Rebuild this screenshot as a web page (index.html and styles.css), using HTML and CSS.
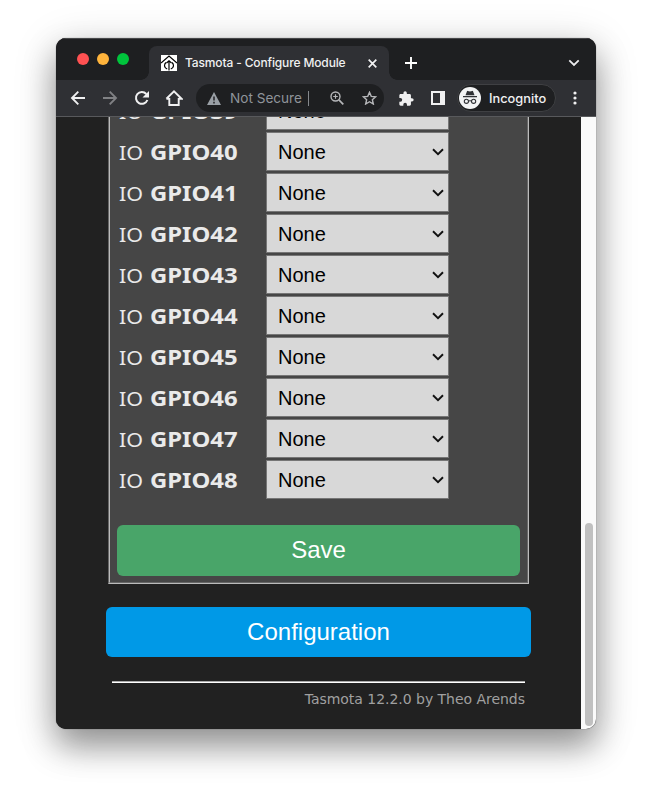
FILE: index.html
```html
<!DOCTYPE html>
<html lang="en">
<head>
<meta charset="utf-8">
<title>Tasmota - Configure Module</title>
<link rel="stylesheet" href="styles.css">
</head>
<body>
<svg width="0" height="0" class="defs"><symbol id="chev" viewBox="0 0 12 8"><path d="M1 1.300 6 6.200l5-4.900" fill="none" stroke="#111" stroke-width="1.900"/></symbol></svg>
<div class="window">
  <header class="tabs">
    <div class="lights"><i class="red"></i><i class="amber"></i><i class="green"></i></div>
    <div class="tab">
      <svg class="favicon" width="16" height="16" viewBox="0 0 16 16"><path fill="#fff" d="M0 0h16v16H0z"/><path d="M0 8 8 1l8 7M8 6v9.500M5.500 8 8 5.700 10.500 8M6.200 14C3 12.800 2.800 9.500 5 7.500M9.800 14c3.200-1.200 3.400-4.500 1.200-6.500" fill="none" stroke="#000" stroke-width="1.200"/></svg>
      <span class="tab-title">Tasmota - Configure Module</span>
      <svg class="close" width="9" height="9" viewBox="0 0 8 8"><path d="m.6.6 6.800 6.800m0-6.800L.6 7.400" stroke="#f1f1f2" stroke-width="1.500"/></svg>
    </div>
    <svg class="plus" width="12" height="12" viewBox="0 0 12 12"><path d="M6 0v12M0 6h12" stroke="#fff" stroke-width="1.900"/></svg>
    <svg class="tab-menu" width="12" height="8" viewBox="0 0 12 8"><path d="m1.300 1.300 4.700 4.600 4.700-4.600" fill="none" stroke="#ececee" stroke-width="1.800"/></svg>
  </header>
  <nav class="toolbar">
    <svg width="16" height="16" viewBox="0 0 16 16"><path d="M15 8H2.200M8.300 1.700 2 8l6.300 6.300" fill="none" stroke="#f0f0f1" stroke-width="1.900"/></svg>
    <svg width="16" height="16" viewBox="0 0 16 16"><path d="M1 8h12.800M7.700 1.700 14 8l-6.300 6.300" fill="none" stroke="#808184" stroke-width="1.900"/></svg>
    <svg width="16" height="16" viewBox="0 0 16 16"><path d="M13.400 10A5.900 5.900 0 1 1 12.300 4" fill="none" stroke="#f0f0f1" stroke-width="2"/><path d="M15 1v6.500H8.500z" fill="#f0f0f1"/></svg>
    <svg width="18" height="16" viewBox="0 0 18 16"><path d="M4.300 8v7h9.400V8M1.400 8.800 9 1.400l7.600 7.400h-2.900M1.400 8.800h2.900" fill="none" stroke="#f0f0f1" stroke-width="1.900"/></svg>
    <div class="address">
      <svg width="14" height="13" viewBox="0 0 14 13"><path d="m7 0 7 13H0z" fill="#9aa0a6"/><path d="M7 4.500v4M7 9.800v1.600" stroke="#202124" stroke-width="1.500"/></svg>
      <span class="insecure">Not Secure</span>
      <i class="caret"></i>
      <svg class="magnify" width="14" height="14" viewBox="0 0 14 14"><g fill="none" stroke="#b5b6b9"><circle cx="5.500" cy="5.500" r="4.500" stroke-width="1.400"/><path d="m8.900 8.900 4.400 4.400" stroke-width="1.700"/><path d="M5.500 3.200v4.600M3.200 5.500h4.600" stroke-width="1.200"/></g></svg>
      <svg class="star" width="15" height="14" viewBox="0 0 15 14"><path d="m7.500 1.300 1.750 4.050 4.450.4-3.350 2.900.98 4.350L7.500 10.700 3.670 13l.98-4.350L1.300 5.750l4.450-.4z" fill="none" stroke="#b5b6b9" stroke-width="1.400"/></svg>
    </div>
    <svg class="puzzle" width="15" height="15" viewBox="1.500 .5 22 22"><path fill="#f0f0f1" d="M20.500 11H19V7c0-1.100-.9-2-2-2h-4V3.500a2.500 2.500 0 0 0-5 0V5H4c-1.100 0-2 .9-2 2v3.800h1.500a2.700 2.700 0 0 1 0 5.400H2V20c0 1.100.9 2 2 2h3.800v-1.500a2.700 2.700 0 0 1 5.400 0V22H17c1.100 0 2-.9 2-2v-4h1.500a2.500 2.500 0 0 0 0-5z"/></svg>
    <svg class="panel" width="14" height="14" viewBox="0 0 14 14"><path fill="#f0f0f1" fill-rule="evenodd" d="M0 0h14v14H0zM2 2v10h7V2z"/></svg>
    <div class="incognito">
      <svg width="22" height="22" viewBox="0 0 22 22"><circle cx="11" cy="11" r="11" fill="#f2f3f4"/><path d="M6.500 8.200 8 4.200q.2-.5.8-.3l2.200.6 2.200-.6q.6-.2.8.3l1.500 4zM4 9h14v1.200H4z" fill="#303236"/><g fill="none" stroke="#303236" stroke-width="1.100"><circle cx="7.400" cy="14.300" r="2.100"/><circle cx="14.600" cy="14.300" r="2.100"/><path d="M9.500 14q1.500-.6 3 0"/></g></svg>
      <span>Incognito</span>
    </div>
    <svg class="dots" width="4" height="14" viewBox="0 0 4 14"><g fill="#f0f0f1"><circle cx="2" cy="2" r="1.600"/><circle cx="2" cy="7" r="1.600"/><circle cx="2" cy="12" r="1.600"/></g></svg>
  </nav>
  <div class="viewport">
    <main class="page">
      <section class="panel-box">
        <div class="row"><div class="label"><span class="io">IO</span><b>GPIO39</b></div><div class="select"><span>None</span><svg><use href="#chev"/></svg></div></div>
        <div class="row"><div class="label"><span class="io">IO</span><b>GPIO40</b></div><div class="select"><span>None</span><svg><use href="#chev"/></svg></div></div>
        <div class="row"><div class="label"><span class="io">IO</span><b>GPIO41</b></div><div class="select"><span>None</span><svg><use href="#chev"/></svg></div></div>
        <div class="row"><div class="label"><span class="io">IO</span><b>GPIO42</b></div><div class="select"><span>None</span><svg><use href="#chev"/></svg></div></div>
        <div class="row"><div class="label"><span class="io">IO</span><b>GPIO43</b></div><div class="select"><span>None</span><svg><use href="#chev"/></svg></div></div>
        <div class="row"><div class="label"><span class="io">IO</span><b>GPIO44</b></div><div class="select"><span>None</span><svg><use href="#chev"/></svg></div></div>
        <div class="row"><div class="label"><span class="io">IO</span><b>GPIO45</b></div><div class="select"><span>None</span><svg><use href="#chev"/></svg></div></div>
        <div class="row"><div class="label"><span class="io">IO</span><b>GPIO46</b></div><div class="select"><span>None</span><svg><use href="#chev"/></svg></div></div>
        <div class="row"><div class="label"><span class="io">IO</span><b>GPIO47</b></div><div class="select"><span>None</span><svg><use href="#chev"/></svg></div></div>
        <div class="row"><div class="label"><span class="io">IO</span><b>GPIO48</b></div><div class="select"><span>None</span><svg><use href="#chev"/></svg></div></div>
        <button class="btn save">Save</button>
      </section>
      <button class="btn config">Configuration</button>
      <footer>Tasmota 12.2.0 by Theo Arends</footer>
    </main>
    <div class="scrollbar"><div class="thumb"></div></div>
  </div>
</div>
</body>
</html>
```
FILE: styles.css
```css
* { box-sizing: border-box; }
body { margin: 0; height: 803px; padding: 38px 56px 74px; background: #fff; overflow: hidden; font-family: "Liberation Sans", Arial, sans-serif; }
svg { display: block; flex: none; }
.defs { position: absolute; }
.window { width: 540px; height: 691px; border-radius: 10px; overflow: hidden; display: flex; flex-direction: column; background: #212121; box-shadow: 0 0 1px rgba(0,0,0,.65), 0 18px 32px rgba(0,0,0,.34), 0 8px 44px rgba(0,0,0,.18); }

.tabs { height: 42px; flex: none; background: #1e1f21; display: flex; border-top: 1px solid #47484a; }
.lights { display: flex; gap: 8px; margin: 14px 0 0 21px; width: 72px; flex: none; }
.lights i { width: 12px; height: 12px; border-radius: 50%; }
.red { background: #ff5152; }
.amber { background: #ffb43c; }
.green { background: #00c43c; }
.tab { position: relative; width: 240px; height: 34px; margin-top: 7px; background: #2f3034; border-radius: 8px 8px 0 0; display: flex; align-items: center; padding: 0 12px; }
.tab::before, .tab::after { content: ""; position: absolute; bottom: 0; width: 8px; height: 8px; }
.tab::before { left: -8px; background: radial-gradient(circle at 0 0, #1e1f21 7.500px, #2f3034 8px); }
.tab::after { right: -8px; background: radial-gradient(circle at 100% 0, #1e1f21 7.500px, #2f3034 8px); }
.tab-title { margin-left: 8px; font: 500 12px/16px Inter, Roboto, sans-serif; color: #f0f0f1; white-space: nowrap; width: 164px; letter-spacing: -.14px; padding-bottom: 1px; }
.close { margin-left: auto; }
.plus { margin: 18px 0 0 16px; }
.tab-menu { margin: 20px 16px 0 auto; }

.toolbar { height: 37px; flex: none; background: #2f3034; border-bottom: 1px solid #58595c; display: flex; align-items: center; padding: 0 0 0 14px; gap: 16px; }
.toolbar > svg:nth-child(4) { margin-left: -1px; }
.address { width: 188px; height: 28px; margin-left: -3px; border-radius: 14px; background: #1e1f21; display: flex; align-items: center; padding: 0 7px 0 11px; flex: none; }
.insecure { width: 76px; margin-left: 9px; font: 13.600px Inter, Roboto, sans-serif; color: #8f949a; white-space: nowrap; }
.caret { width: 1px; height: 15px; background: #85888c; margin-left: 4px; }
.magnify { margin-left: 21px; }
.star { margin-left: 18px; }
.puzzle { margin-left: -1px; }
.panel { margin-left: 1px; }
.incognito { width: 99px; height: 28px; margin-left: -4px; flex: none; border: 1px solid #3f4043; border-radius: 14px; background: #1e1f21; display: flex; align-items: center; padding-left: 1px; gap: 8px; font: 500 12.800px Inter, Roboto, sans-serif; color: #f0f0f1; }
.dots { margin-left: 1px; }

.viewport { flex: 1; min-height: 0; display: flex; overflow: hidden; }
.page { width: 525px; flex: none; display: flex; flex-direction: column; align-items: center; background: #212121; }
.panel-box { width: 421px; height: 493px; margin-top: -26px; flex: none; border: 2px groove #bbb; border-top: 0; background: #464646; display: flex; flex-direction: column; gap: 2px; padding: 0 7px; }
.row { display: flex; height: 39px; flex: none; }
.label { display: flex; width: 149px; padding: 2px 0 0 2px; align-items: center; font: 20.500px/37px "Noto Sans", Verdana, sans-serif; color: #eaeaea; }
.io { display: inline-block; width: 31px; }
.io, .label b { transform: scaleX(1.165); transform-origin: left; }
.io { transform: scaleX(1.05); }
.select { width: 183px; border: 1px solid #767676; background: #d8d8d8; display: flex; align-items: center; justify-content: space-between; padding: 0 4px 0 11px; font-size: 20px; color: #000; }
.select span { padding-top: 2px; }
.select svg { width: 12px; height: 8px; }
.btn { border: 0; padding: 0; border-radius: 6px; color: #fff; font: 24px "Liberation Sans", Arial, sans-serif; flex: none; }
.save { width: 403px; height: 51px; margin: 24px 0 0; padding-bottom: 2px; background: #49a569; }
.config { width: 425px; height: 50px; margin-top: 23px; background: #0099e7; }
footer { width: 413px; margin-top: 24px; border-top: 2px groove #fff; padding-top: 7px; text-align: right; font: 14px/18px "DejaVu Sans", Verdana, sans-serif; letter-spacing: -.03px; color: #a0a0a0; }
.scrollbar { width: 15px; background: #fafafa; padding: 406px 3px 3px 4px; }
.thumb { height: 203px; border-radius: 4px; background: #c0c0c0; }
```
